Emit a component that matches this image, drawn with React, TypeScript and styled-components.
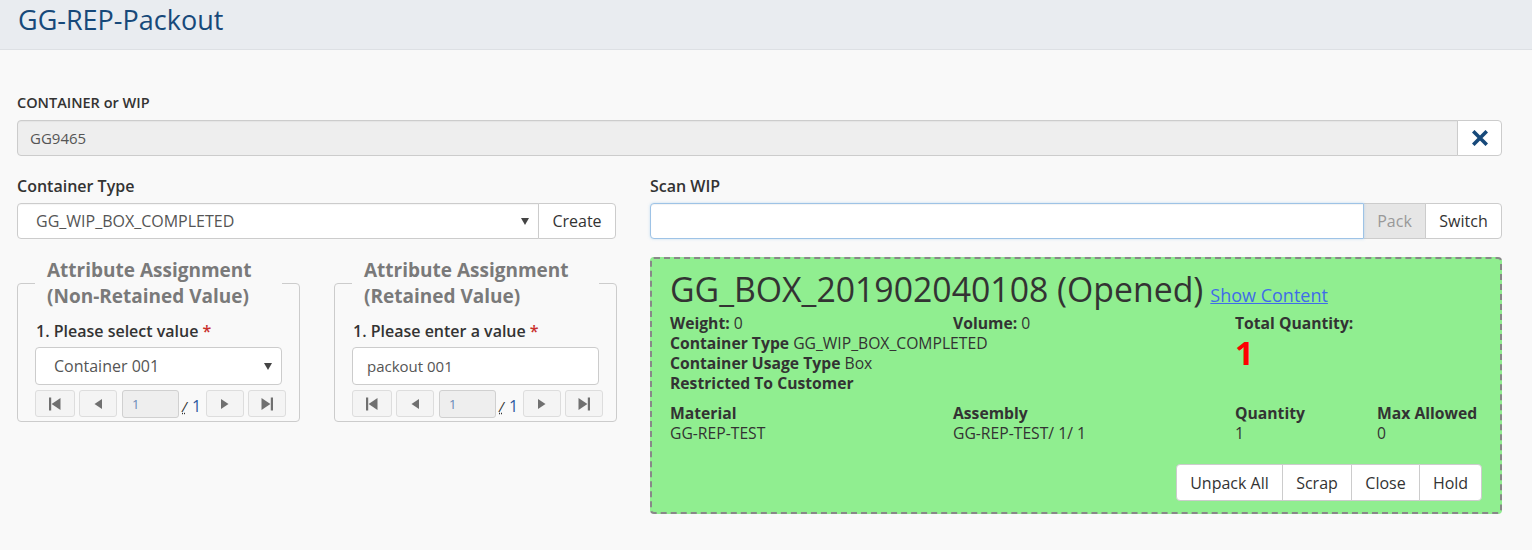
import React from "react";
import styled, { createGlobalStyle } from "styled-components";

const Global = createGlobalStyle`
  html, body { margin: 0; padding: 0; background: #f9f9f9; }
  body { font-family: "Open Sans", "Noto Sans", sans-serif; color: #333; font-size: 16px; }
  * { box-sizing: border-box; }
`;

const Header = styled.header`
  height: 50px;
  background: #e9ecf0;
  border-bottom: 1px solid #dde0e4;
  padding: 0 18px;
  display: flex;
  align-items: center;
`;

const Title = styled.h1`
  margin: 0;
  margin-top: -11px;
  font-size: 27px;
  font-weight: 400;
  color: #17497a;
`;

const Body = styled.main`
  padding: 43px 30px 20px 17px;
`;

const Label = styled.div<{ $size?: number }>`
  font-size: ${(p) => p.$size ?? 16}px;
  font-weight: 600;
  line-height: 20px;
  color: #333;
  margin-bottom: 7px;
`;

const Field = styled.div<{ $mb?: number }>`
  margin-bottom: ${(p) => p.$mb ?? 0}px;
`;

const InputGroup = styled.div`
  display: flex;
  height: 36px;
`;

const TextBox = styled.div<{ $bg?: string; $focus?: boolean }>`
  flex: 1;
  min-width: 0;
  height: 100%;
  background: ${(p) => p.$bg ?? "#fff"};
  border: 1px solid ${(p) => (p.$focus ? "#9ec3e6" : "#cccccc")};
  border-radius: 4px 0 0 4px;
  padding: 0 12px;
  display: flex;
  align-items: center;
  font-size: 15px;
  color: #555;
  position: relative;
  box-shadow: ${(p) =>
    p.$focus
      ? "inset 0 1px 1px rgba(0,0,0,.05), 0 0 3px rgba(102,175,233,.35)"
      : "inset 0 1px 1px rgba(0,0,0,.04)"};
`;

const SelectText = styled.span<{ $pad?: number; $size?: number }>`
  padding-left: ${(p) => p.$pad ?? 6}px;
  font-size: ${(p) => p.$size ?? 16}px;
  color: #555;
`;

const Caret = styled.span`
  position: absolute;
  right: 9px;
  top: 50%;
  margin-top: -3px;
  width: 0;
  height: 0;
  border-left: 4px solid transparent;
  border-right: 4px solid transparent;
  border-top: 7px solid #444;
`;

const AddonButton = styled.button<{ $disabled?: boolean; $w: number; $last?: boolean }>`
  width: ${(p) => p.$w}px;
  height: 100%;
  background: ${(p) => (p.$disabled ? "#e6e6e6" : "#fff")};
  color: ${(p) => (p.$disabled ? "#999" : "#333")};
  border: 1px solid #cccccc;
  border-left: ${(p) => (p.$disabled ? "none" : "1px solid #cccccc")};
  border-radius: ${(p) => (p.$last ? "0 4px 4px 0" : "0")};
  font-family: inherit;
  font-size: 16px;
  padding: 0;
  display: flex;
  align-items: center;
  justify-content: center;
  margin-left: ${(p) => (p.$disabled ? "0" : "-1px")};
`;

const Columns = styled.div`
  display: flex;
  gap: 34px;
  align-items: flex-start;
`;

const LeftCol = styled.div`
  width: 599px;
  flex-shrink: 0;
`;

const RightCol = styled.div`
  flex: 1;
  min-width: 0;
`;

const FieldsetRow = styled.div`
  display: flex;
  gap: 34px;
  margin-top: 18px;
  width: 633px;
`;

const Fieldset = styled.fieldset`
  width: 283px;
  margin: 0;
  padding: 0 17px 4px 17px;
  border: 1px solid #cccccc;
  border-radius: 4px;
  min-width: 0;
`;

const Legend = styled.legend`
  padding: 0 12px;
  font-size: 19px;
  font-weight: 700;
  line-height: 26px;
  color: #7a7a7a;
  width: 100%;
`;

const SubLabel = styled.div`
  font-size: 16px;
  font-weight: 600;
  line-height: 20px;
  color: #333;
  margin: 12px 0 6px 1px;
`;

const Req = styled.span`
  color: #c9302c;
  margin-left: 4px;
`;

const Control = styled.div`
  height: 38px;
  width: 247px;
  background: #fff;
  border: 1px solid #ccc;
  border-radius: 4px;
  position: relative;
  display: flex;
  align-items: center;
  padding: 0 14px;
  color: #555;
`;

const Pager = styled.div`
  display: flex;
  align-items: center;
  margin-top: 5px;
  height: 27px;
  width: 252px;
`;

const PageBtn = styled.button<{ $ml?: number; $w?: number }>`
  width: ${(p) => p.$w ?? 39}px;
  height: 27px;
  margin-left: ${(p) => p.$ml ?? 0}px;
  background: #f4f4f4;
  border: 1px solid #dddddd;
  border-radius: 3px;
  padding: 0;
  display: flex;
  align-items: center;
  justify-content: center;
`;

const PageInput = styled.div`
  width: 57px;
  height: 28px;
  margin-left: 5px;
  background: #eeeeee;
  border: 1px solid #d0d0d0;
  border-radius: 3px;
  font-size: 13px;
  color: #6a8ab8;
  padding-left: 9px;
  display: flex;
  align-items: center;
`;

const PageOf = styled.span`
  width: 27px;
  margin-top: 4px;
  padding-left: 3px;
  color: #333;
  display: flex;
  align-items: baseline;
`;

const Abbr = styled.abbr`
  text-decoration: underline dotted;
  font-size: 14px;
  margin-right: 5px;
  font-style: italic;
`;

const Total = styled.span`
  color: #2c5aa0;
  font-size: 16px;
`;

const Panel = styled.section`
  margin-top: 18px;
  background: #90ee90;
  border: 2px dashed #888;
  border-radius: 4px;
  padding: 6px 18px 11px 18px;
`;

const PanelTitle = styled.div`
  display: flex;
  align-items: baseline;
  line-height: 48px;
  height: 48px;
`;

const BoxName = styled.span`
  font-size: 33.8px;
  color: #333;
  font-weight: 400;
`;

const ShowLink = styled.a`
  font-size: 18px;
  color: #3f6ce8;
  text-decoration: underline;
  margin-left: 7px;
`;

const InfoTop = styled.div`
  display: grid;
  grid-template-columns: 565px 1fr;
`;

const Pair = styled.div`
  display: grid;
  grid-template-columns: 283px 1fr;
`;

const Line = styled.div`
  font-size: 15.7px;
  line-height: 20px;
  color: #333;
  white-space: nowrap;
`;

const B = styled.b`
  font-weight: 700;
`;

const BigQty = styled.div`
  font-size: 33px;
  font-weight: 700;
  color: #ff0000;
  line-height: 40px;
`;

const InfoGrid = styled.div`
  display: grid;
  grid-template-columns: 283px 282px 142px 1fr;
  margin-top: 10px;
`;

const HeadCell = styled.div`
  font-size: 15.7px;
  font-weight: 700;
  line-height: 20px;
  color: #333;
`;

const ValCell = styled.div`
  font-size: 15.7px;
  line-height: 20px;
  color: #333;
`;

const Actions = styled.div`
  display: flex;
  justify-content: flex-end;
  margin-top: 21px;
`;

const ActionBtn = styled.button<{ $w: number; $pos: "first" | "mid" | "last" }>`
  width: ${(p) => p.$w}px;
  height: 37px;
  background: #fff;
  border: 1px solid #cccccc;
  margin-left: ${(p) => (p.$pos === "first" ? 0 : -1)}px;
  border-radius: ${(p) =>
    p.$pos === "first" ? "4px 0 0 4px" : p.$pos === "last" ? "0 4px 4px 0" : "0"};
  font-family: inherit;
  font-size: 16px;
  color: #333;
  padding: 0;
`;

const XIcon = () => (
  <svg width="16" height="16" viewBox="0 0 16 16">
    <path
      d="M2.5 2.5 L13.5 13.5 M13.5 2.5 L2.5 13.5"
      stroke="#17497a"
      strokeWidth="3.6"
      strokeLinecap="square"
      fill="none"
    />
  </svg>
);

const PagerIcon = ({ kind }: { kind: "first" | "prev" | "next" | "last" }) => {
  const c = "#707070";
  return (
    <svg width="16" height="16" viewBox="0 0 16 16">
      {kind === "first" && (
        <>
          <rect x="2" y="1.5" width="2.2" height="13" fill={c} />
          <polygon points="13.5,2 13.5,14 4.6,8" fill={c} />
        </>
      )}
      {kind === "prev" && <polygon points="12,3 12,13 4.5,8" fill={c} />}
      {kind === "next" && <polygon points="4,3 4,13 11.5,8" fill={c} />}
      {kind === "last" && (
        <>
          <polygon points="2.5,2 2.5,14 11.4,8" fill={c} />
          <rect x="11.8" y="1.5" width="2.2" height="13" fill={c} />
        </>
      )}
    </svg>
  );
};

const PagerRow = () => (
  <Pager>
    <PageBtn $w={40}>
      <PagerIcon kind="first" />
    </PageBtn>
    <PageBtn $ml={4} $w={38}>
      <PagerIcon kind="prev" />
    </PageBtn>
    <PageInput>1</PageInput>
    <PageOf>
      <Abbr title="of">/</Abbr>
      <Total>1</Total>
    </PageOf>
    <PageBtn $w={38}>
      <PagerIcon kind="next" />
    </PageBtn>
    <PageBtn $ml={4} $w={38}>
      <PagerIcon kind="last" />
    </PageBtn>
  </Pager>
);

export default function App() {
  return (
    <>
      <Global />
      <Header>
        <Title>GG-REP-Packout</Title>
      </Header>
      <Body>
        <Field $mb={20}>
          <Label $size={14.5}>CONTAINER or WIP</Label>
          <InputGroup>
            <TextBox $bg="#eeeeee">GG9465</TextBox>
            <AddonButton $w={45} $last>
              <XIcon />
            </AddonButton>
          </InputGroup>
        </Field>
        <Columns>
          <LeftCol>
            <Label>Container Type</Label>
            <InputGroup>
              <TextBox>
                <SelectText>GG_WIP_BOX_COMPLETED</SelectText>
                <Caret />
              </TextBox>
              <AddonButton $w={78} $last>
                Create
              </AddonButton>
            </InputGroup>
            <FieldsetRow>
              <Fieldset>
                <Legend>Attribute Assignment (Non-Retained Value)</Legend>
                <SubLabel>
                  1. Please select value<Req>*</Req>
                </SubLabel>
                <Control>
                  <SelectText $pad={4}>Container 001</SelectText>
                  <Caret />
                </Control>
                <PagerRow />
              </Fieldset>
              <Fieldset>
                <Legend>Attribute Assignment (Retained Value)</Legend>
                <SubLabel>
                  1. Please enter a value<Req>*</Req>
                </SubLabel>
                <Control>
                  <SelectText $pad={0} $size={15}>
                    packout 001
                  </SelectText>
                </Control>
                <PagerRow />
              </Fieldset>
            </FieldsetRow>
          </LeftCol>
          <RightCol>
            <Label>Scan WIP</Label>
            <InputGroup>
              <TextBox $focus />
              <AddonButton $w={62} $disabled>
                Pack
              </AddonButton>
              <AddonButton $w={77} $last>
                Switch
              </AddonButton>
            </InputGroup>
            <Panel>
              <PanelTitle>
                <BoxName>GG_BOX_201902040108 (Opened)</BoxName>
                <ShowLink href="#">Show Content</ShowLink>
              </PanelTitle>
              <InfoTop>
                <div>
                  <Pair>
                    <Line>
                      <B>Weight:</B> 0
                    </Line>
                    <Line>
                      <B>Volume:</B> 0
                    </Line>
                  </Pair>
                  <Line>
                    <B>Container Type</B> GG_WIP_BOX_COMPLETED
                  </Line>
                  <Line>
                    <B>Container Usage Type</B> Box
                  </Line>
                  <Line>
                    <B>Restricted To Customer</B>
                  </Line>
                </div>
                <div>
                  <Line>
                    <B>Total Quantity:</B>
                  </Line>
                  <BigQty>1</BigQty>
                </div>
              </InfoTop>
              <InfoGrid>
                <HeadCell>Material</HeadCell>
                <HeadCell>Assembly</HeadCell>
                <HeadCell>Quantity</HeadCell>
                <HeadCell>Max Allowed</HeadCell>
                <ValCell>GG-REP-TEST</ValCell>
                <ValCell>GG-REP-TEST/ 1/ 1</ValCell>
                <ValCell>1</ValCell>
                <ValCell>0</ValCell>
              </InfoGrid>
              <Actions>
                <ActionBtn $w={107} $pos="first">
                  Unpack All
                </ActionBtn>
                <ActionBtn $w={70} $pos="mid">
                  Scrap
                </ActionBtn>
                <ActionBtn $w={69} $pos="mid">
                  Close
                </ActionBtn>
                <ActionBtn $w={63} $pos="last">
                  Hold
                </ActionBtn>
              </Actions>
            </Panel>
          </RightCol>
        </Columns>
      </Body>
    </>
  );
}
